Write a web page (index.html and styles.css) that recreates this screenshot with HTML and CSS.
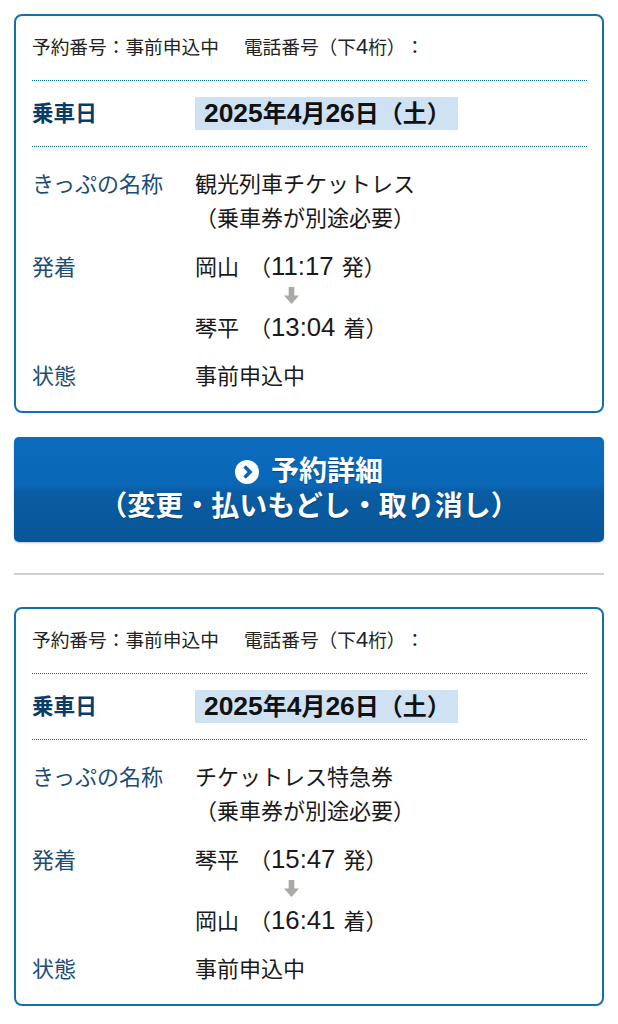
FILE: index.html
```html
<!DOCTYPE html>
<html lang="ja">
<head>
<meta charset="utf-8">
<title>予約詳細</title>
<link rel="stylesheet" href="styles.css">
</head>
<body>
<main class="page">
  <section class="card">
    <p class="head">予約番号：事前申込中<span class="gap"></span>電話番号（下<span class="num">4</span>桁）：</p>
    <div class="date-row">
      <span class="date-label">乗車日</span>
      <span class="date-value"><span class="num">2025</span>年<span class="num">4</span>月<span class="num">26</span>日（土）</span>
    </div>
    <div class="row name-row">
      <span class="label">きっぷの名称</span>
      <div class="value"><div>観光列車チケットレス</div><div>（乗車券が別途必要）</div></div>
    </div>
    <div class="row route-row">
      <span class="label">発着</span>
      <div class="value">
        <div>岡山<span class="time">（<span class="num">11:17</span> 発）</span></div>
        <svg class="arrow" viewBox="0 0 16 18" aria-hidden="true"><path d="M5 0h6v9h5l-8 9-8-9h5z"/></svg>
        <div>琴平<span class="time">（<span class="num">13:04</span> 着）</span></div>
      </div>
    </div>
    <div class="row state-row">
      <span class="label">状態</span>
      <div class="value">事前申込中</div>
    </div>
  </section>

  <a class="btn">
    <span class="btn-line"><svg class="btn-icon" viewBox="0 0 24 24" aria-hidden="true"><circle cx="12" cy="12" r="12" fill="#fff"/><path d="M9.6 6.6 15 12l-5.4 5.4" fill="none" stroke="#0a66b5" stroke-width="3.6"/></svg>予約詳細</span>
    <span class="btn-line btn-sub">（変更・払いもどし・取り消し）</span>
  </a>

  <hr class="rule">

  <section class="card">
    <p class="head">予約番号：事前申込中<span class="gap"></span>電話番号（下<span class="num">4</span>桁）：</p>
    <div class="date-row">
      <span class="date-label">乗車日</span>
      <span class="date-value"><span class="num">2025</span>年<span class="num">4</span>月<span class="num">26</span>日（土）</span>
    </div>
    <div class="row name-row">
      <span class="label">きっぷの名称</span>
      <div class="value"><div>チケットレス特急券</div><div>（乗車券が別途必要）</div></div>
    </div>
    <div class="row route-row">
      <span class="label">発着</span>
      <div class="value">
        <div>琴平<span class="time">（<span class="num">15:47</span> 発）</span></div>
        <svg class="arrow" viewBox="0 0 16 18" aria-hidden="true"><path d="M5 0h6v9h5l-8 9-8-9h5z"/></svg>
        <div>岡山<span class="time">（<span class="num">16:41</span> 着）</span></div>
      </div>
    </div>
    <div class="row state-row">
      <span class="label">状態</span>
      <div class="value">事前申込中</div>
    </div>
  </section>
</main>
</body>
</html>
```

FILE: styles.css
```css
* { box-sizing: border-box; }
html, body { margin: 0; background: #fff; }
body {
  font-family: "Liberation Sans", "Noto Sans CJK JP", sans-serif;
  color: #111;
  text-spacing-trim: space-all;
}
.page {
  padding: 14px 14px 0;
  display: flex;
  flex-direction: column;
}
.card {
  height: 399px;
  border: 2px solid #1470ad;
  border-radius: 8px;
  padding: 0 15px 0 16px;
  background: #fff;
}
.num { font-size: 1.17em; line-height: 1; }
.head {
  margin: 0;
  height: 64px;
  line-height: 64px;
  font-size: 18.7px;
  color: #222;
  white-space: nowrap;
}
.gap { display: inline-block; width: 25px; }
.date-row {
  height: 67px;
  border-top: 1px dotted #0a6aa8;
  border-bottom: 1px dotted #0a6aa8;
  display: flex;
  align-items: center;
}
.date-label {
  width: 163px;
  font-size: 21.6px;
  line-height: 30px;
  font-weight: 700;
  color: #0b3c66;
}
.date-value {
  width: 263px;
  height: 33px;
  line-height: 33px;
  padding-left: 9px;
  background: #cfe2f3;
  font-size: 24px;
  font-weight: 700;
  white-space: nowrap;
}
.date-value .num { font-size: 26.4px; }
.row { display: flex; font-size: 22px; line-height: 34px; }
.label { width: 163px; color: #1b4d76; flex: none; }
.value { color: #1a1a1a; }
.name-row { margin-top: 21px; line-height: 33.5px; }
.route-row { margin-top: 16px; line-height: 34px; }
.state-row { margin-top: 14px; }
.time { margin-left: 10px; word-spacing: 2px; }
.arrow {
  display: block;
  width: 15px;
  height: 17px;
  margin: 2px 0 8px 89px;
  fill: #a9aaa4;
}
.btn {
  margin-top: 24px;
  height: 105px;
  border-radius: 5px;
  background: linear-gradient(#0a6bbd 0, #0a67b6 46%, #0a5ca3 52%, #085698 100%);
  box-shadow: 0 1px 2px rgba(0, 0, 0, .25);
  color: #fff;
  font-weight: 700;
  font-size: 28px;
  line-height: 36px;
  text-align: center;
  padding-top: 17px;
  text-shadow: 0 1px 1px rgba(0, 0, 0, .35);
  display: flex;
  flex-direction: column;
  align-items: center;
}
.btn-line { display: flex; align-items: center; white-space: nowrap; }
.btn-sub { height: 34px; }
.btn-icon { width: 24px; height: 24px; margin-right: 12px; }
.rule {
  margin: 31px 0 32px;
  border: 0;
  height: 2px;
  background: #cfcfcf;
}
```
